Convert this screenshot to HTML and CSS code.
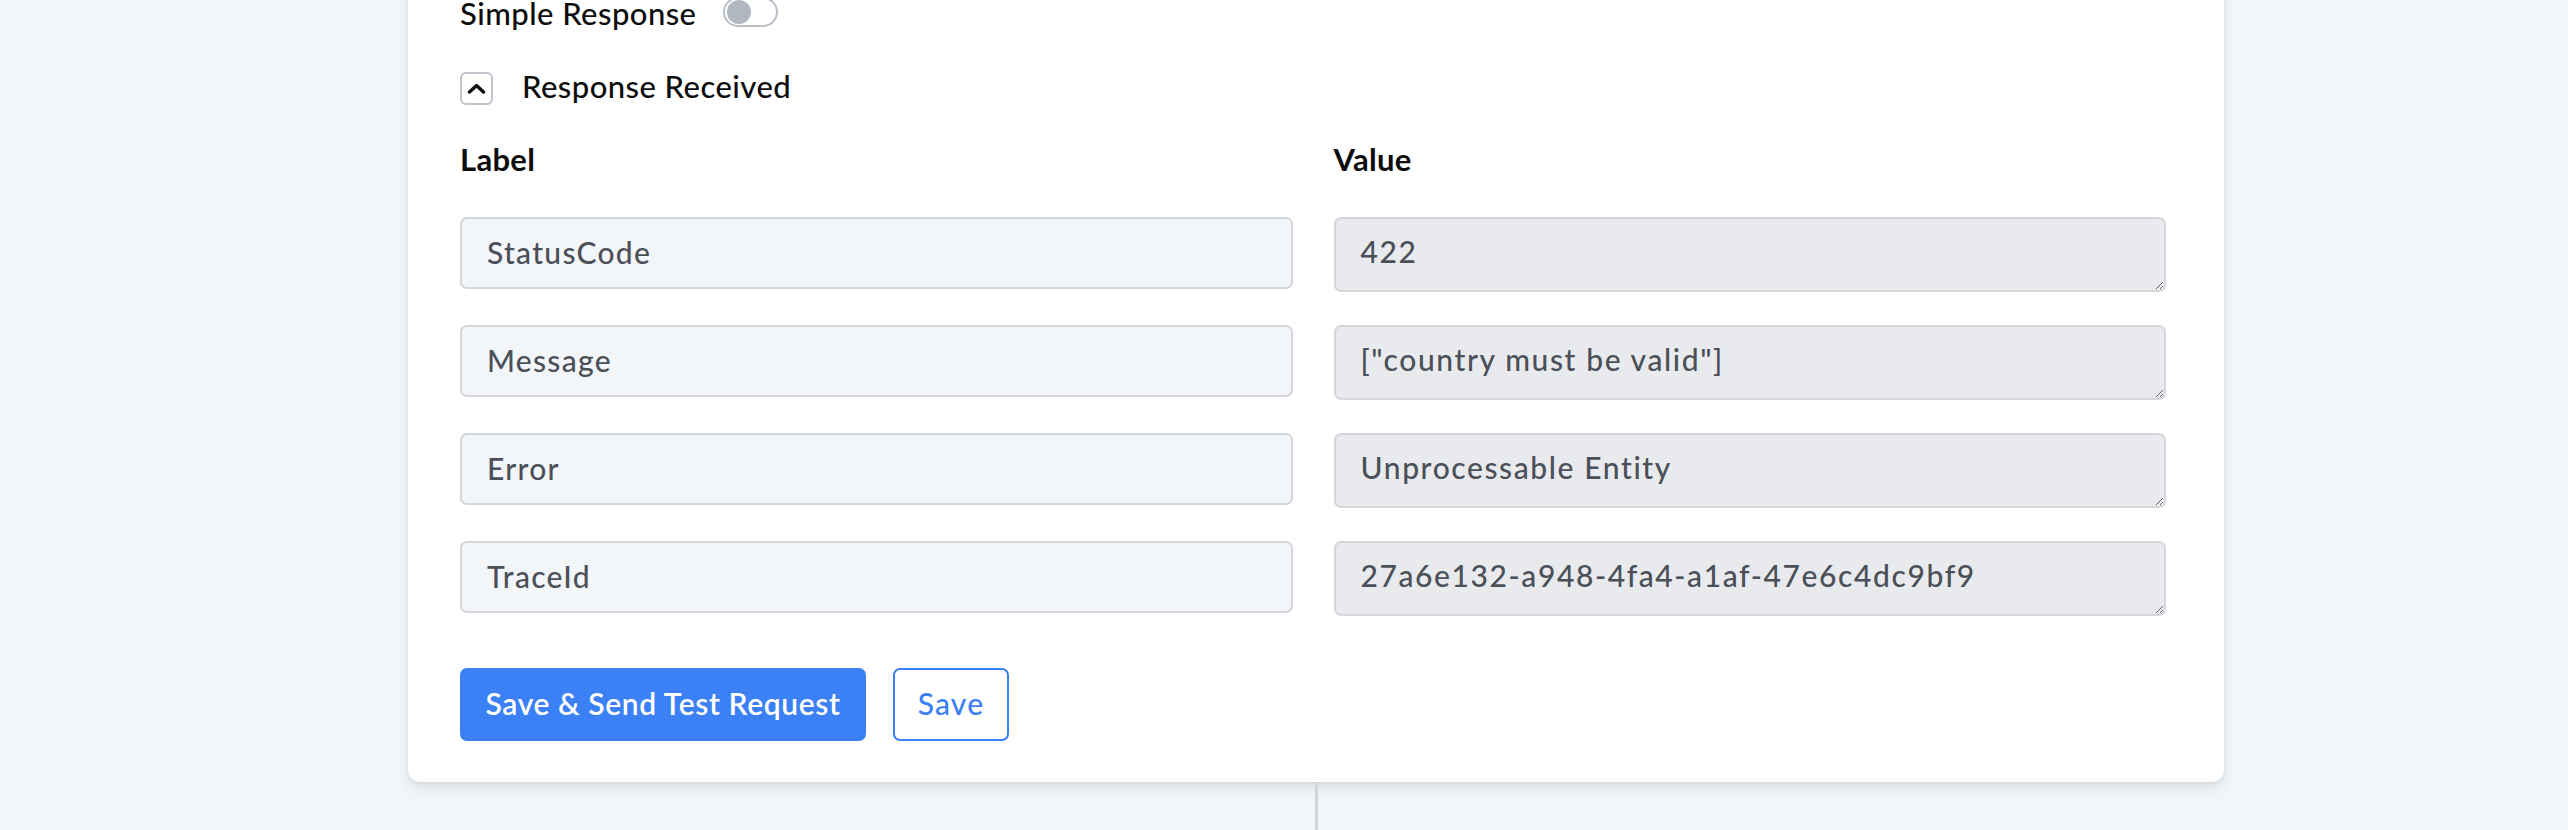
FILE: index.html
```html
<!DOCTYPE html>
<html lang="en">
<head>
<meta charset="utf-8">
<title>Response Received</title>
<link rel="stylesheet" href="styles.css">
</head>
<body>
<div class="page">
  <section class="card">
    <div class="toggle-row">
      <span class="row-text">Simple Response</span>
      <span class="switch"><span class="knob"></span></span>
    </div>
    <div class="collapse-row">
      <button class="collapse-btn" type="button" aria-label="Collapse">
        <svg width="19" height="11" viewBox="0 0 19 11"><path d="M2.5 9 L9.5 2.5 L16.5 9" fill="none" stroke="#111" stroke-width="3.4" stroke-linecap="round" stroke-linejoin="round"/></svg>
      </button>
      <span class="row-text">Response Received</span>
    </div>
    <div class="grid">
      <div class="col-head">Label</div>
      <div class="col-head">Value</div>

      <input class="field" type="text" value="StatusCode" readonly>
      <textarea class="value" readonly>422</textarea>

      <input class="field" type="text" value="Message" readonly>
      <textarea class="value" readonly>["country must be valid"]</textarea>

      <input class="field" type="text" value="Error" readonly>
      <textarea class="value" readonly>Unprocessable Entity</textarea>

      <input class="field" type="text" value="TraceId" readonly>
      <textarea class="value" readonly>27a6e132-a948-4fa4-a1af-47e6c4dc9bf9</textarea>
    </div>
    <div class="actions">
      <button class="btn btn-primary" type="button">Save &amp; Send Test Request</button>
      <button class="btn btn-outline" type="button">Save</button>
    </div>
  </section>
  <div class="connector"></div>
</div>
</body>
</html>
```
FILE: styles.css
```css
html, body {
  margin: 0;
  padding: 0;
  background: #f3f6f9;
  height: 100%;
  overflow: hidden;
}

body {
  font-family: Lato, "Open Sans", sans-serif;
  color: #111;
}

.page {
  display: flex;
  flex-direction: column;
  width: 1816px;
  margin-left: 408px;
}

.card {
  box-sizing: border-box;
  width: 1816px;
  margin-top: -30px;
  padding: 27px 58px 41px 52px;
  background: #fff;
  border-radius: 0 0 12px 12px;
  box-shadow: 0 6px 14px rgba(30, 41, 59, 0.10), 0 2px 4px rgba(30, 41, 59, 0.06);
}

.row-text {
  font-size: 31px;
  font-weight: 500;
  line-height: 30px;
  letter-spacing: 0.45px;
  color: #0d0d0d;
}

.toggle-row {
  display: flex;
  align-items: center;
  height: 30px;
  gap: 27px;
}

.toggle-row .row-text {
  margin-top: 2px;
}

.switch {
  box-sizing: border-box;
  width: 55px;
  height: 30px;
  border: 2px solid #b9bfc7;
  border-radius: 15px;
  display: flex;
  align-items: center;
  padding-left: 2px;
}

.knob {
  width: 24px;
  height: 24px;
  border-radius: 50%;
  background: #b0b7c0;
}

.collapse-row {
  display: flex;
  align-items: center;
  gap: 29px;
  margin-top: 45px;
  height: 33px;
}

.collapse-row .row-text {
  margin-top: -6px;
}

.collapse-btn {
  box-sizing: border-box;
  width: 33px;
  height: 33px;
  padding: 0;
  border: 2px solid #bfc5cd;
  border-radius: 6px;
  background: #fff;
  display: flex;
  align-items: center;
  justify-content: center;
}

.collapse-btn svg {
  display: block;
  margin-top: -1px;
}

.grid {
  display: grid;
  grid-template-columns: 1fr 1fr;
  column-gap: 41px;
  row-gap: 33px;
  margin-top: 36px;
  align-items: start;
}

.col-head {
  font-size: 31px;
  font-weight: 700;
  line-height: 36px;
  letter-spacing: 0.3px;
  color: #0d0d0d;
  margin-bottom: 7px;
}

.field,
.value {
  box-sizing: border-box;
  width: 100%;
  margin: 0;
  font-family: Lato, "Open Sans", sans-serif;
  font-size: 30px;
  font-weight: 500;
  letter-spacing: 1.3px;
  color: #4b5058;
  border: 2px solid #d3d7dc;
  border-radius: 7px;
  padding: 0 25px;
  outline: none;
}

.field {
  height: 72px;
  background: #f3f6f9;
  padding-bottom: 3px;
}

.value {
  display: block;
  height: 75px;
  background: #e9eaed;
  padding-top: 14px;
  line-height: 36px;
  letter-spacing: 1.6px;
  resize: vertical;
  overflow: hidden;
}

.actions {
  display: flex;
  gap: 27px;
  margin-top: 52px;
}

.btn {
  box-sizing: border-box;
  height: 73px;
  border-radius: 7px;
  font-family: Lato, "Open Sans", sans-serif;
  font-size: 30px;
  font-weight: 600;
  letter-spacing: 0.6px;
  padding: 0 20px 3px;
  cursor: pointer;
}

.btn-primary {
  background: #3b80f5;
  border: none;
  color: #fff;
  width: 406px;
}

.btn-outline {
  background: #fff;
  border: 2px solid #3b80f5;
  color: #3b80f5;
  width: 116px;
  font-weight: 500;
  letter-spacing: 1.2px;
}

.connector {
  align-self: center;
  width: 3px;
  height: 60px;
  background: #d2d5da;
}
```
